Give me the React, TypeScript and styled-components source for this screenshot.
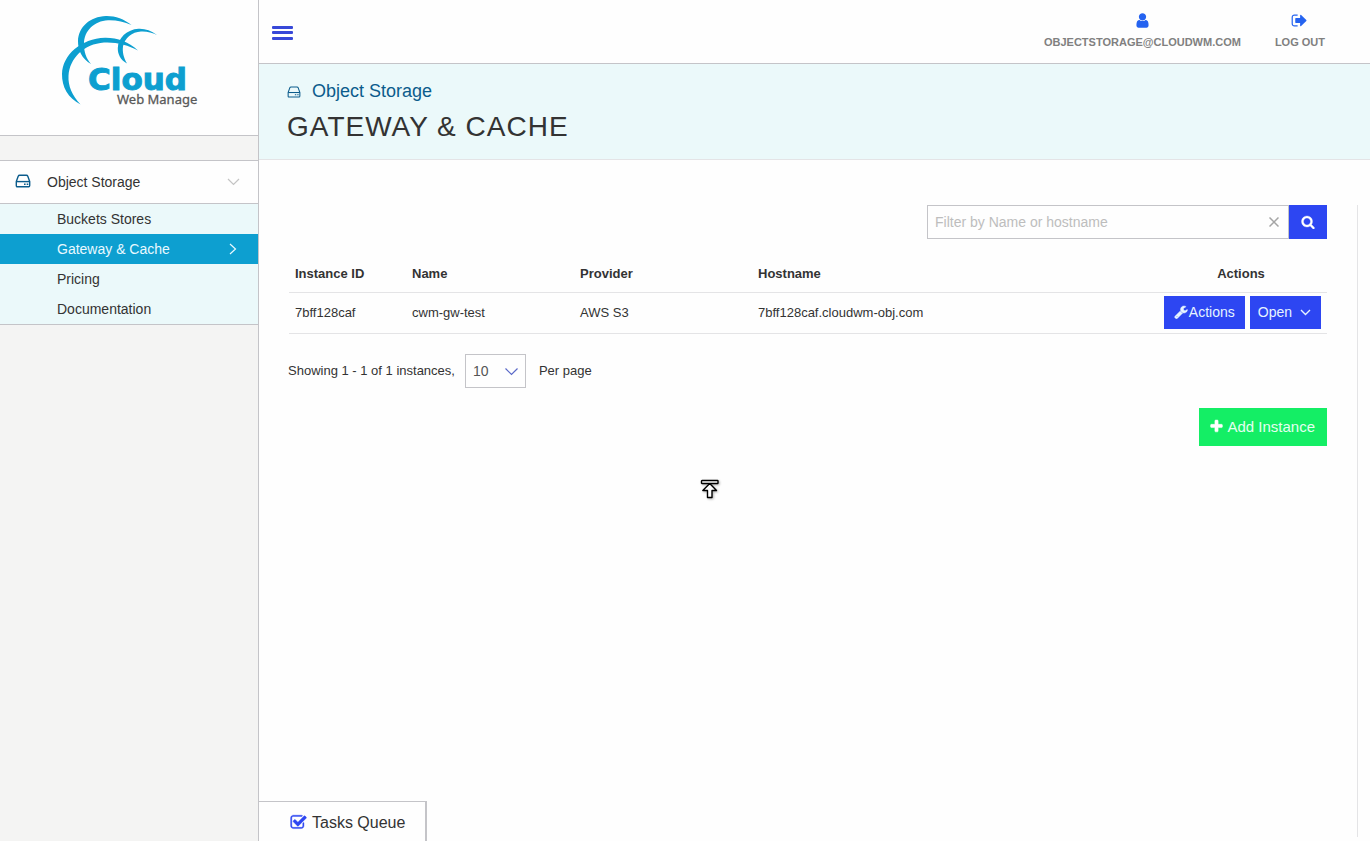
import React from "react";
import styled, { createGlobalStyle } from "styled-components";

const color = {
  page: "#fefefe",
  line: "#c4c4c8",
  softLine: "#e4e4e6",
  mist: "#ebf9fa",
  gray: "#f4f4f3",
  cyan: "#0d9fd0",
  blue: "#2d46f2",
  icon: "#2563f0",
  navy: "#0b5c8c",
  text: "#333333",
};

const GlobalStyle = createGlobalStyle`
  *, *::before, *::after { box-sizing: border-box; }
  body {
    margin: 0;
    background: ${color.page};
    color: ${color.text};
    font-family: "Liberation Sans", Arial, sans-serif;
    font-size: 13px;
  }
  button, input, select { font-family: inherit; margin: 0; }
  a { color: inherit; text-decoration: none; }
`;

const Shell = styled.div`
  display: flex;
  min-height: 100vh;
`;

/* Sidebar */

const Sidebar = styled.aside`
  flex: 0 0 259px;
  background: ${color.gray};
  border-right: 1px solid ${color.line};
`;

const LogoLink = styled.a`
  display: block;
  height: 136px;
  padding: 10px 0 0 56px;
  background: ${color.page};
  border-bottom: 1px solid ${color.line};
`;

const SideNav = styled.nav`
  margin-top: 24px;
  border-top: 1px solid ${color.line};
  border-bottom: 1px solid ${color.line};
  font-size: 14px;
`;

const NavGroup = styled.button`
  display: flex;
  align-items: center;
  width: 100%;
  height: 43px;
  padding: 0 18px 0 15px;
  border: 0;
  border-bottom: 1px solid ${color.line};
  background: ${color.page};
  color: ${color.text};
  font-size: 14px;
  text-align: left;

  > svg { margin-bottom: 2px; }
`;

const NavLabel = styled.span`
  flex: 1;
  margin-left: 16px;
`;

const SubList = styled.ul`
  margin: 0;
  padding: 0;
  list-style: none;
  background: ${color.mist};
`;

const SubLink = styled.a<{ $active?: boolean }>`
  display: flex;
  align-items: center;
  justify-content: space-between;
  height: 30px;
  padding: 0 21px 0 57px;
  background: ${(p) => (p.$active ? color.cyan : "transparent")};
  color: ${(p) => (p.$active ? "#e9f9ff" : color.text)};
`;

/* Main column */

const Main = styled.main`
  flex: 1;
  min-width: 0;
  display: flex;
  flex-direction: column;
`;

const TopBar = styled.header`
  display: flex;
  align-items: center;
  justify-content: space-between;
  height: 64px;
  padding: 0 45px 0 13px;
  border-bottom: 1px solid ${color.line};
`;

const MenuButton = styled.button`
  display: flex;
  padding: 2px 0 0;
  border: 0;
  background: none;
  color: #3748d8;
`;

const UserNav = styled.nav`
  display: flex;
  gap: 34px;
  padding-bottom: 4px;
`;

const UserLink = styled.a`
  display: flex;
  flex-direction: column;
  align-items: center;
  gap: 7px;
  color: #808080;
  font-size: 11px;
  font-weight: bold;
  line-height: 12px;
  text-transform: uppercase;

  svg { color: ${color.icon}; }
`;

const PageHead = styled.section`
  height: 96px;
  padding: 16px 28px;
  background: ${color.mist};
  border-bottom: 1px solid ${color.softLine};
`;

const Crumb = styled.a`
  display: flex;
  align-items: center;
  gap: 11px;
  color: ${color.navy};
  font-size: 18px;
  line-height: 22px;

  > svg { margin-top: 2px; }
`;

const Title = styled.h1`
  margin: 9px 0 0;
  font-size: 28px;
  font-weight: normal;
  letter-spacing: 1px;
  line-height: 32px;
  text-transform: uppercase;
`;

const Content = styled.section`
  flex: 1;
  margin: 45px 12px 4px 0;
  padding: 0 30px;
  border-right: 1px solid ${color.softLine};
`;

const SearchForm = styled.form`
  display: flex;
  width: 400px;
  height: 34px;
  margin-left: auto;
`;

const SearchField = styled.div`
  flex: 1;
  display: flex;
  align-items: center;
  border: 1px solid ${color.line};
`;

const SearchInput = styled.input`
  flex: 1;
  min-width: 0;
  height: 100%;
  padding: 0 7px;
  border: 0;
  outline: 0;
  background: none;
  color: ${color.text};
  font-size: 14px;

  &::placeholder { color: #bdbdbd; opacity: 1; }
`;

const ClearButton = styled.button`
  display: flex;
  padding: 0 9px;
  border: 0;
  background: none;
  color: #a5a5a5;
`;

const SearchButton = styled.button`
  display: flex;
  align-items: center;
  justify-content: center;
  width: 38px;
  padding: 0;
  border: 0;
  background: ${color.blue};
  color: #ffffff;
`;

const Table = styled.table`
  width: 100%;
  margin-top: 16px;
  border-collapse: separate;
  border-spacing: 0;
  table-layout: fixed;
`;

const Cell = styled.td`
  height: 41px;
  padding: 0 6px 2px;
  border-bottom: 1px solid ${color.softLine};
`;

const HeadCell = styled.th<{ $width?: number; $center?: boolean }>`
  width: ${(p) => (p.$width ? `${p.$width}px` : "auto")};
  height: 38px;
  padding: 0 6px;
  border-bottom: 1px solid ${color.softLine};
  font-weight: bold;
  text-align: ${(p) => (p.$center ? "center" : "left")};
`;

const RowActions = styled.div`
  display: flex;
  justify-content: flex-end;
  gap: 5px;
`;

const RowButton = styled.button<{ $menu?: boolean }>`
  display: flex;
  align-items: center;
  gap: ${(p) => (p.$menu ? 8 : 1)}px;
  height: 33px;
  padding: 0 10px 0 ${(p) => (p.$menu ? 8 : 10)}px;
  border: 0;
  background: ${color.blue};
  color: #e6f4ff;
  font-size: 14px;
`;

const Pager = styled.div`
  display: flex;
  align-items: center;
  margin: 20px 0 0 -1px;

  > span, > label { padding-bottom: 2px; }
`;

const PageSize = styled.div`
  display: grid;
  align-items: center;
  width: 61px;
  height: 34px;
  margin: 0 13px 0 10px;

  > * { grid-area: 1 / 1; }
  > svg {
    justify-self: end;
    margin: 2px 8px 0 0;
    color: #5a69c8;
    pointer-events: none;
  }
`;

const PageSizeSelect = styled.select`
  width: 100%;
  height: 100%;
  padding: 0 7px;
  border: 1px solid ${color.line};
  border-radius: 0;
  appearance: none;
  background: none;
  color: #555555;
  font-size: 14px;
`;

const AddButton = styled.button`
  display: flex;
  align-items: center;
  gap: 3px;
  height: 38px;
  margin: 20px 0 0 auto;
  padding: 0 12px 2px 10px;
  border: 0;
  background: #14ee65;
  color: #e4fff0;
  font-size: 15px;

  svg { color: #ffffff; }
`;

const TasksQueue = styled.button`
  position: fixed;
  left: 259px;
  bottom: 0;
  display: flex;
  align-items: center;
  gap: 5px;
  height: 40px;
  padding: 2px 20px 0 31px;
  border: solid ${color.line};
  border-width: 1px 2px 0 0;
  background: ${color.page};
  color: ${color.text};
  font-size: 16px;

  svg { color: ${color.blue}; }
`;

const Pointer = styled.svg`
  position: fixed;
  top: 479px;
  left: 700px;
  pointer-events: none;
  filter: drop-shadow(1px 1px 1px rgba(0, 0, 0, 0.3));
`;

/* Icons */

const glyphs = {
  user: "M1536 1399q0 109-62.5 187t-150.5 78h-854q-88 0-150.5-78t-62.5-187q0-85 8.5-160.5t31.5-152 58.5-131 94-89 134.5-34.5q131 128 313 128t313-128q76 0 134.5 34.5t94 89 58.5 131 31.5 152 8.5 160.5zm-256-887q0 159-112.5 271.5t-271.5 112.5-271.5-112.5-112.5-271.5 112.5-271.5 271.5-112.5 271.5 112.5 112.5 271.5z",
  signOut: "M704 1440q0 4 1 20t.5 26.5-3 23.5-10 19.5-20.5 6.5h-320q-119 0-203.5-84.5t-84.5-203.5v-704q0-119 84.5-203.5t203.5-84.5h320q13 0 22.5 9.5t9.5 22.5q0 4 1 20t.5 26.5-3 23.5-10 19.5-20.5 6.5h-320q-66 0-113 47t-47 113v704q0 66 47 113t113 47h312l11.5 1 11.5 3 8 5.5 7 9 2 13.5zm928-544q0 26-19 45l-544 544q-19 19-45 19t-45-19-19-45v-288h-448q-26 0-45-19t-19-45v-384q0-26 19-45t45-19h448v-288q0-26 19-45t45-19 45 19l544 544q19 19 19 45z",
  search: "M1216 832q0-185-131.5-316.5t-316.5-131.5-316.5 131.5-131.5 316.5 131.5 316.5 316.5 131.5 316.5-131.5 131.5-316.5zm512 832q0 52-38 90t-90 38q-54 0-90-38l-343-342q-179 124-399 124-143 0-273.5-55.5t-225-150-150-225-55.5-273.5 55.5-273.5 150-225 225-150 273.5-55.5 273.5 55.5 225 150 150 225 55.5 273.5q0 220-124 399l343 343q37 37 37 90z",
  plus: "M1600 736v192q0 40-28 68t-68 28h-416v416q0 40-28 68t-68 28h-192q-40 0-68-28t-28-68v-416h-416q-40 0-68-28t-28-68v-192q0-40 28-68t68-28h416v-416q0-40 28-68t68-28h192q40 0 68 28t28 68v416h416q40 0 68 28t28 68z",
  wrench: "M448 1472q0-26-19-45t-45-19-45 19-19 45 19 45 45 19 45-19 19-45zm644-420l-682 682q-37 37-90 37-52 0-91-37l-106-108q-38-36-38-90 0-53 38-91l681-681q39 98 114.5 173.5t173.5 114.5zm634-435q0 39-23 106-47 134-164.5 217.5t-258.5 83.500q-185 0-316.5-131.5t-131.5-316.5 131.5-316.5 316.5-131.5q58 0 121.5 16.5t107.5 46.5q16 11 16 28t-16 28l-293 169v224l193 107q5-3 79-48.5t135.5-81 70.5-35.5q15 0 23.5 10t8.5 25z",
  check: "M1472 930v318q0 119-84.5 203.5t-203.5 84.5h-832q-119 0-203.5-84.5t-84.5-203.5v-832q0-119 84.5-203.5t203.5-84.5h832q63 0 117 25 15 7 18 23 3 17-9 29l-49 49q-10 10-23 10-3 0-9-2-23-6-45-6h-832q-66 0-113 47t-47 113v832q0 66 47 113t113 47h832q66 0 113-47t47-113v-254q0-13 9-22l64-64q10-10 23-10 6 0 12 3 20 8 20 29zm231-489l-814 814q-24 24-57 24t-57-24l-430-430q-24-24-24-57t24-57l110-110q24-24 57-24t57 24l263 263 647-647q24-24 57-24t57 24l110 110q24 24 24 57t-24 57z",
};

const Glyph = ({ name, size, weight = 0 }: { name: keyof typeof glyphs; size: number; weight?: number }) => (
  <svg width={size} height={size} viewBox="0 0 1792 1792" fill="currentColor" stroke="currentColor" strokeWidth={weight} aria-hidden="true">
    <path d={glyphs[name]} />
  </svg>
);

const DriveIcon = ({ size, stroke }: { size: number; stroke: number }) => (
  <svg width={size} height={size} viewBox="0 0 16 16" fill="none" stroke={color.navy} strokeWidth={stroke} strokeLinejoin="round" aria-hidden="true">
    <path d="M1.3 8.6 3.2 3.2Q3.6 2.2 4.6 2.2h6.800q1 0 1.400 1l1.900 5.400v4q0 1.200-1 1.200H2.300q-1 0-1-1.200z" />
    <path d="M1.300 8.600h13.400" />
    <path d="M9 11.200h1.600M11.700 11.200h1.600" />
  </svg>
);

const Chevron = ({ d, width, height, stroke = 1 }: { d: string; width: number; height: number; stroke?: number }) => (
  <svg width={width} height={height} viewBox={`0 0 ${width} ${height}`} fill="none" stroke="currentColor" strokeWidth={stroke} aria-hidden="true">
    <path d={d} />
  </svg>
);

const Faded = styled.span`
  display: flex;
  color: #c4c4c4;
`;

const Logo = () => (
  <svg width="146" height="102" viewBox="56 10 146 102" role="img" aria-label="Cloud Web Manage">
    <g fill={color.cyan}>
      <path d="M131.500 25C124 19 115 15.800 106 16C90 16.500 78.500 27 78 41C77.800 50 82 59 91 64C86 58 84 52 84 44C84 31 94 21 108 20.300C116 20 124 21.800 131.500 25Z" />
      <path d="M138 50.500C129 42 117 37.600 105 37.800C81 38.500 62.500 55 62 74C61.800 87 68 98 80.500 104.500C72 95 68 86 68.500 76C69.500 58 84 44 104 42.500C116 41.800 128 45 138 50.500Z" />
      <path d="M157 35C151 30.500 145 28.500 138.500 28.800C127 29.500 118 38 117.800 48C117.600 54 120.500 60 127 63.500C123.500 57 122.300 52 123 46.500C124.500 38 132 32 141 31.500C147 31.200 152 32.500 157 35Z" />
    </g>
    <text x="88" y="90" fill={color.cyan} stroke={color.cyan} strokeWidth="1" fontFamily="'DejaVu Sans', sans-serif" fontWeight="bold" fontSize="31">Cloud</text>
    <text x="117" y="104" fill="#595959" stroke="#595959" strokeWidth="0.300" fontFamily="'Noto Sans', sans-serif" fontSize="13">Web Manage</text>
  </svg>
);

const subPages = ["Buckets Stores", "Gateway & Cache", "Pricing", "Documentation"];

const instances = [
  { id: "7bff128caf", name: "cwm-gw-test", provider: "AWS S3", hostname: "7bff128caf.cloudwm-obj.com" },
];

export default function App() {
  return (
    <>
      <GlobalStyle />
      <Shell>
        <Sidebar>
          <LogoLink href="#home">
            <Logo />
          </LogoLink>
          <SideNav aria-label="Main">
            <NavGroup type="button" aria-expanded="true">
              <DriveIcon size={16} stroke={1.4} />
              <NavLabel>Object Storage</NavLabel>
              <Faded>
                <Chevron width={13} height={8} stroke={1.2} d="M1 1 6.500 6.500 12 1" />
              </Faded>
            </NavGroup>
            <SubList>
              {subPages.map((page) => {
                const active = page === "Gateway & Cache";
                return (
                  <li key={page}>
                    <SubLink href="#page" $active={active} aria-current={active ? "page" : undefined}>
                      {page}
                      {active && <Chevron width={8} height={12} stroke={1.2} d="M1 1 6.500 6 1 11" />}
                    </SubLink>
                  </li>
                );
              })}
            </SubList>
          </SideNav>
        </Sidebar>

        <Main>
          <TopBar>
            <MenuButton type="button" aria-label="Toggle menu">
              <svg width="21" height="14" viewBox="0 0 21 14" fill="currentColor" aria-hidden="true">
                <rect width="21" height="3" rx="1" />
                <rect y="5" width="21" height="3" rx="1" />
                <rect y="11" width="21" height="3" rx="1" />
              </svg>
            </MenuButton>
            <UserNav aria-label="Account">
              <UserLink href="#account">
                <Glyph name="user" size={17} />
                objectstorage@cloudwm.com
              </UserLink>
              <UserLink href="#logout">
                <Glyph name="signOut" size={17} />
                Log out
              </UserLink>
            </UserNav>
          </TopBar>

          <PageHead>
            <Crumb href="#storage">
              <DriveIcon size={14} stroke={1.2} />
              Object Storage
            </Crumb>
            <Title>Gateway &amp; Cache</Title>
          </PageHead>

          <Content>
            <SearchForm role="search" onSubmit={(e) => e.preventDefault()}>
              <SearchField>
                <SearchInput type="text" aria-label="Filter by Name or hostname" placeholder="Filter by Name or hostname" />
                <ClearButton type="reset" aria-label="Clear">
                  <Chevron width={10} height={10} stroke={1.5} d="M0.500 0.500l9 9M9.500 0.500l-9 9" />
                </ClearButton>
              </SearchField>
              <SearchButton type="submit" aria-label="Search">
                <Glyph name="search" size={14} weight={40} />
              </SearchButton>
            </SearchForm>

            <Table>
              <thead>
                <tr>
                  <HeadCell $width={117}>Instance ID</HeadCell>
                  <HeadCell $width={168}>Name</HeadCell>
                  <HeadCell $width={178}>Provider</HeadCell>
                  <HeadCell>Hostname</HeadCell>
                  <HeadCell $width={172} $center>Actions</HeadCell>
                </tr>
              </thead>
              <tbody>
                {instances.map((row) => (
                  <tr key={row.id}>
                    <Cell>{row.id}</Cell>
                    <Cell>{row.name}</Cell>
                    <Cell>{row.provider}</Cell>
                    <Cell>{row.hostname}</Cell>
                    <Cell>
                      <RowActions>
                        <RowButton type="button">
                          <Glyph name="wrench" size={14} weight={60} />
                          Actions
                        </RowButton>
                        <RowButton type="button" $menu>
                          Open
                          <Chevron width={11} height={7} stroke={1.4} d="M1 1 5.500 5.500 10 1" />
                        </RowButton>
                      </RowActions>
                    </Cell>
                  </tr>
                ))}
              </tbody>
            </Table>

            <Pager>
              <span>Showing 1 - 1 of 1 instances,</span>
              <PageSize>
                <PageSizeSelect id="page-size" defaultValue="10">
                  <option>10</option>
                  <option>25</option>
                  <option>50</option>
                </PageSizeSelect>
                <Chevron width={13} height={8} stroke={1.200} d="M0.500 0.500 6.500 6.500 12.500 0.500" />
              </PageSize>
              <label htmlFor="page-size">Per page</label>
            </Pager>

            <AddButton type="button">
              <Glyph name="plus" size={15} weight={60} />
              Add Instance
            </AddButton>
          </Content>
        </Main>
      </Shell>

      <TasksQueue type="button">
        <Glyph name="check" size={17} weight={40} />
        Tasks Queue
      </TasksQueue>

      <Pointer width="20" height="21" viewBox="0 0 20 21" fill="#ffffff" stroke="#000000" strokeWidth="1.400" strokeLinejoin="round" aria-hidden="true">
        <path d="M9.700 4.500 16.500 11.500h-4.500v7H7.500v-7H2.800z" />
        <rect x="1.500" y="1.500" width="16.500" height="3" rx="0.500" />
      </Pointer>
    </>
  );
}
